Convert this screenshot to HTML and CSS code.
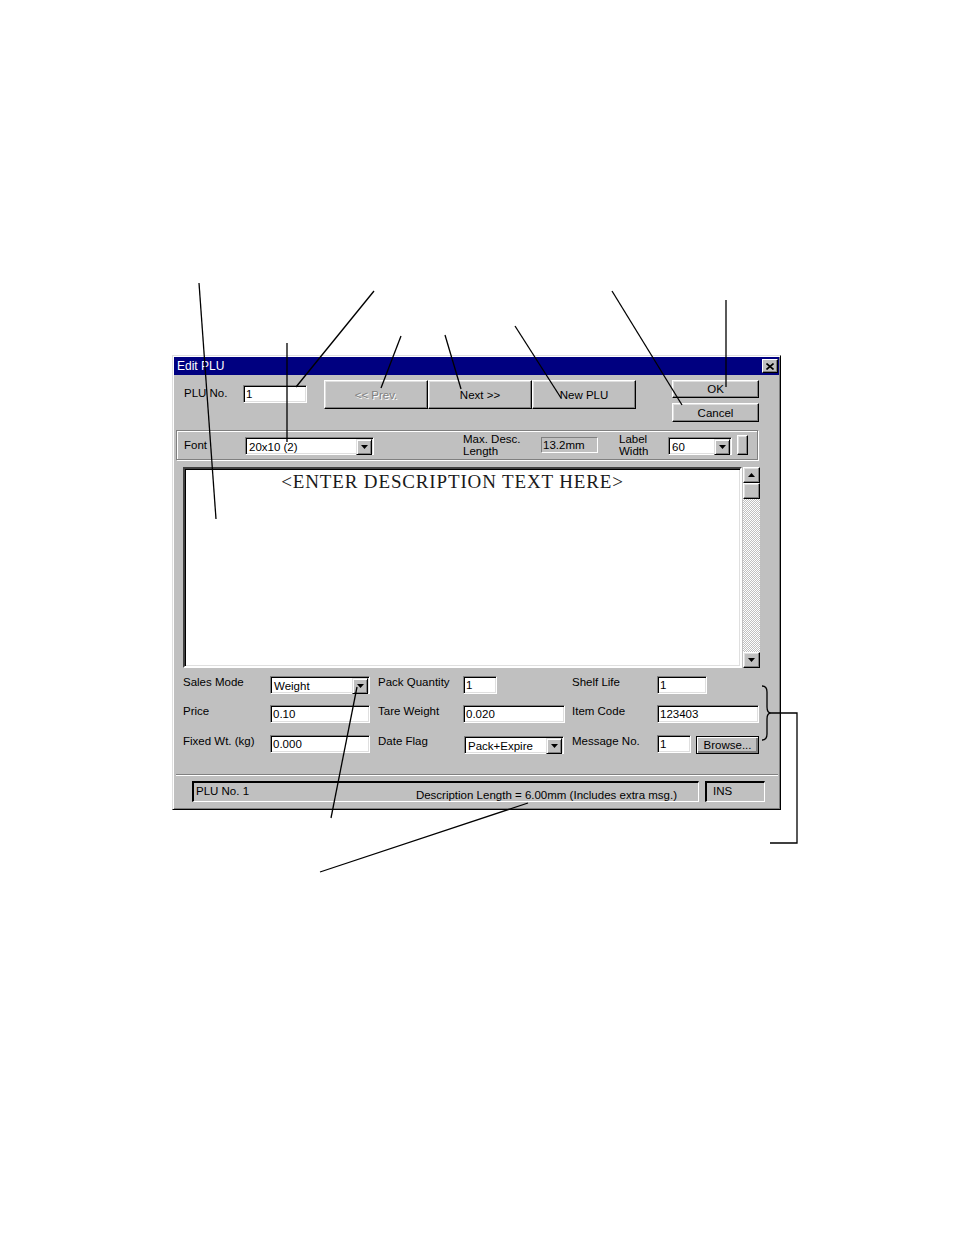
FILE: index.html
```html
<!DOCTYPE html>
<html lang="en">
<head>
  <meta charset="UTF-8" />
  <title>Edit PLU</title>
  <link rel="stylesheet" href="styles.css">
</head>
<body>
  <div class="page">
    <div class="dialog">
      <div class="titlebar">
        <span class="title">Edit PLU</span>
        <div class="close-btn">
          <svg width="8" height="7" viewBox="0 0 8 7"><path d="M0.5 0.5 L7.5 6.5 M7.5 0.5 L0.5 6.5" stroke="#000" stroke-width="1.6"/></svg>
        </div>
      </div>

      <div class="dlg-body">
        <!-- PLU number + navigation -->
        <div class="top-row">
          <div class="plu-label">PLU No.</div>
          <div class="field plu-field">1</div>
          <div class="nav">
            <div class="btn nav-btn disabled">&lt;&lt; Prev.</div>
            <div class="btn nav-btn">Next &gt;&gt;</div>
            <div class="btn nav-btn">New PLU</div>
          </div>
          <div class="ok-col">
            <div class="btn ok-btn">OK</div>
            <div class="btn cancel-btn">Cancel</div>
          </div>
        </div>

        <!-- Font group -->
        <div class="font-group">
          <div class="font-label">Font</div>
          <div class="combo font-combo">
            <span class="combo-text">20x10 (2)</span>
            <span class="combo-btn"><svg width="7" height="4" viewBox="0 0 7 4"><polygon points="0,0 7,0 3.5,4" fill="#000"/></svg></span>
          </div>
          <div class="maxdesc">Max. Desc.<br>Length</div>
          <div class="static-box">13.2mm</div>
          <div class="label-width">Label<br>Width</div>
          <div class="combo width-combo">
            <span class="combo-text">60</span>
            <span class="combo-btn"><svg width="7" height="4" viewBox="0 0 7 4"><polygon points="0,0 7,0 3.5,4" fill="#000"/></svg></span>
          </div>
          <div class="btn tiny-btn"></div>
        </div>

        <!-- Description editor -->
        <div class="editor-row">
          <div class="editor">
            <div class="editor-text">&lt;ENTER DESCRIPTION TEXT HERE&gt;</div>
          </div>
          <div class="scrollbar">
            <div class="btn sb-btn"><svg width="7" height="4" viewBox="0 0 7 4"><polygon points="0,4 7,4 3.5,0" fill="#000"/></svg></div>
            <div class="btn sb-thumb"></div>
            <div class="sb-track"></div>
            <div class="btn sb-btn"><svg width="7" height="4" viewBox="0 0 7 4"><polygon points="0,0 7,0 3.5,4" fill="#000"/></svg></div>
          </div>
        </div>

        <!-- PLU fields -->
        <div class="form-grid">
          <div class="lbl">Sales Mode</div>
          <div class="combo w100">
            <span class="combo-text">Weight</span>
            <span class="combo-btn"><svg width="7" height="4" viewBox="0 0 7 4"><polygon points="0,0 7,0 3.5,4" fill="#000"/></svg></span>
          </div>
          <div class="lbl">Pack Quantity</div>
          <div class="field w34">1</div>
          <div class="lbl">Shelf Life</div>
          <div class="field w50">1</div>

          <div class="lbl">Price</div>
          <div class="field w100">0.10</div>
          <div class="lbl">Tare Weight</div>
          <div class="field w102">0.020</div>
          <div class="lbl">Item Code</div>
          <div class="field w102">123403</div>

          <div class="lbl">Fixed Wt. (kg)</div>
          <div class="field w100">0.000</div>
          <div class="lbl">Date Flag</div>
          <div class="combo w100 date-combo">
            <span class="combo-text">Pack+Expire</span>
            <span class="combo-btn"><svg width="7" height="4" viewBox="0 0 7 4"><polygon points="0,0 7,0 3.5,4" fill="#000"/></svg></span>
          </div>
          <div class="lbl">Message No.</div>
          <div class="msg-cell">
            <div class="field w34">1</div>
            <div class="btn browse-btn">Browse...</div>
          </div>
        </div>

        <div class="separator"></div>

        <div class="statusbar">
          <div class="panel panel-main">
            <span class="st-left">PLU No. 1</span>
            <span class="st-right">Description Length = 6.00mm (Includes extra msg.)</span>
          </div>
          <div class="panel panel-ins"><span class="st-left">INS</span></div>
        </div>
      </div>
    </div>

    <!-- Callout lines -->
    <svg class="callouts" width="954" height="1235" viewBox="0 0 954 1235">
      <g stroke="#000" stroke-width="1.3" fill="none">
        <line x1="199" y1="283" x2="216" y2="519" />
        <line x1="374" y1="291" x2="296" y2="387" />
        <line x1="287" y1="343" x2="287" y2="442" />
        <line x1="401" y1="336" x2="381" y2="388" />
        <line x1="445" y1="335" x2="461" y2="389" />
        <line x1="515" y1="326" x2="561" y2="398" />
        <line x1="612" y1="291" x2="682" y2="405" />
        <line x1="726" y1="300" x2="726" y2="387" />
        <line x1="331" y1="818" x2="357" y2="687" />
        <line x1="320" y1="872" x2="528" y2="803" />
        <path d="M762 686 Q767 686 767 692 L767 707 Q767 713 771 713 Q767 713 767 719 L767 734 Q767 740 762 740" />
        <polyline points="771,713 797,713 797,843 770,843" />
      </g>
    </svg>
  </div>
</body>
</html>
```

FILE: styles.css
```css
* {
  margin: 0;
  padding: 0;
  box-sizing: border-box;
}

body {
  background: #fff;
  font-family: "Liberation Sans", Arial, sans-serif;
  font-size: 11.5px;
  color: #000;
}

.page {
  position: relative;
  width: 954px;
  height: 1235px;
  padding: 355px 0 0 172px;
}

.callouts {
  position: absolute;
  top: 0;
  left: 0;
  pointer-events: none;
}

/* Window frame */
.dialog {
  width: 609px;
  height: 455px;
  background: #c0c0c0;
  border: 1px solid;
  border-color: #dfdfdf #000 #000 #dfdfdf;
  box-shadow: inset 1px 1px #fff, inset -1px -1px #808080;
  padding: 1px;
  display: flex;
  flex-direction: column;
}

.titlebar {
  height: 18px;
  background: #000080;
  color: #fff;
  display: flex;
  align-items: center;
  justify-content: space-between;
  padding: 0 1px 0 3px;
  font-size: 12px;
}

.close-btn {
  width: 16px;
  height: 14px;
  background: #c0c0c0;
  border: 1px solid;
  border-color: #fff #000 #000 #fff;
  box-shadow: inset -1px -1px #808080;
  display: flex;
  justify-content: center;
  align-items: center;
}

.dlg-body {
  flex: 1;
  display: flex;
  flex-direction: column;
  padding-top: 5px;
}

/* Generic controls */
.btn {
  background: #c0c0c0;
  border: 1px solid;
  border-color: #fff #000 #000 #fff;
  box-shadow: inset -1px -1px #808080, inset 1px 1px #dfdfdf;
  display: flex;
  justify-content: center;
  align-items: center;
}

.field {
  height: 18px;
  background: #fff;
  border: 1px solid;
  border-color: #808080 #fff #fff #808080;
  box-shadow: inset 1px 1px #000, inset -1px -1px #dfdfdf;
  padding: 1px 2px 0;
  line-height: 15px;
}

.combo {
  height: 18px;
  background: #fff;
  border: 1px solid;
  border-color: #808080 #fff #fff #808080;
  box-shadow: inset 1px 1px #000, inset -1px -1px #dfdfdf;
  display: flex;
  padding: 1px;
}

.combo-text {
  flex: 1;
  padding: 1px 0 0 2px;
  line-height: 14px;
}

.combo-btn {
  width: 16px;
  height: 16px;
  background: #c0c0c0;
  border: 1px solid;
  border-color: #dfdfdf #000 #000 #dfdfdf;
  box-shadow: inset 1px 1px #fff, inset -1px -1px #808080;
  display: flex;
  justify-content: center;
  align-items: center;
}

/* Top row */
.top-row {
  display: flex;
  align-items: flex-start;
  height: 42px;
}

.plu-label {
  margin: 6px 0 0 10px;
  width: 59px;
  line-height: 14px;
}

.plu-field {
  width: 64px;
  margin-top: 5px;
}

.nav {
  display: flex;
  margin-left: 17px;
}

.nav-btn {
  width: 104px;
  height: 29px;
}

.nav-btn.disabled {
  color: #808080;
  text-shadow: 1px 1px #fff;
}

.ok-col {
  margin-left: 36px;
  width: 87px;
  display: flex;
  flex-direction: column;
  gap: 5px;
}

.ok-btn {
  height: 18px;
}

.cancel-btn {
  height: 19px;
}

/* Font group */
.font-group {
  margin: 8px 0 0 2px;
  width: 582px;
  height: 30px;
  border: 1px solid #808080;
  box-shadow: inset 1px 1px #fff, 1px 1px #fff;
  display: flex;
  align-items: center;
  padding-left: 7px;
}

.font-label {
  width: 61px;
}

.font-combo {
  width: 129px;
  margin-top: 2px;
}

.maxdesc {
  margin-left: 89px;
  width: 78px;
  line-height: 12px;
}

.static-box {
  width: 57px;
  height: 16px;
  border: 1px solid;
  border-color: #808080 #fff #fff #808080;
  padding-left: 1px;
  line-height: 14px;
}

.label-width {
  margin-left: 21px;
  width: 28px;
  line-height: 12px;
  text-align: center;
}

.width-combo {
  margin: 2px 0 0 21px;
  width: 64px;
}

.tiny-btn {
  margin-left: 5px;
  width: 11px;
  height: 20px;
}

/* Editor */
.editor-row {
  display: flex;
  margin: 7px 0 0 9px;
  height: 201px;
}

.editor {
  width: 559px;
  height: 201px;
  background: #fff;
  border: 2px solid;
  border-color: #404040 #fff #fff #404040;
  box-shadow: inset 1px 1px #000, inset -1px -1px #dfdfdf;
}

.editor-text {
  font-family: "Liberation Serif", "Times New Roman", serif;
  font-size: 19px;
  color: #1a1a1a;
  text-align: center;
  padding: 2px 20px 0 0;
  line-height: 22px;
  letter-spacing: 0.85px;
}

.scrollbar {
  margin-left: 1px;
  width: 17px;
  display: flex;
  flex-direction: column;
}

.sb-btn,
.sb-thumb {
  height: 16px;
}

.sb-track {
  flex: 1;
  background: repeating-conic-gradient(#c0c0c0 0 25%, #fff 0 50%) 0 0 / 2px 2px;
}

/* Field grid */
.form-grid {
  margin: 8px 0 0 9px;
  display: grid;
  grid-template-columns: 87px 108px 85px 109px 85px 110px;
  grid-template-rows: 29px 30px 19px;
  align-items: start;
}

.lbl {
  line-height: 14px;
  margin-top: -1px;
}

.w34 { width: 34px; }
.w50 { width: 50px; }
.w100 { width: 100px; }
.w102 { width: 102px; }

.date-combo {
  margin: 1px 0 0 1px;
}

.msg-cell {
  display: flex;
  gap: 5px;
}

.browse-btn {
  width: 63px;
  height: 18px;
  margin-top: 1px;
  border-color: #000;
  box-shadow: inset 1px 1px #fff, inset -2px -2px #808080;
}

.separator {
  margin: 20px 1px 0 2px;
  height: 2px;
  border-top: 1px solid #808080;
  border-bottom: 1px solid #fff;
}

/* Status bar */
.statusbar {
  display: flex;
  margin-top: 5px;
  padding-left: 18px;
}

.panel {
  height: 21px;
  border-style: solid;
  border-width: 2px 1px 1px 2px;
  border-color: #000 #fff #fff #000;
  display: flex;
  justify-content: space-between;
  align-items: flex-start;
}

.panel-main {
  width: 507px;
  padding: 0 21px 0 2px;
}

.panel-ins {
  margin-left: 6px;
  width: 60px;
  padding-left: 6px;
}

.st-left {
  line-height: 14px;
  margin-top: 1px;
}

.st-right {
  line-height: 14px;
  margin-top: 5px;
}
```
